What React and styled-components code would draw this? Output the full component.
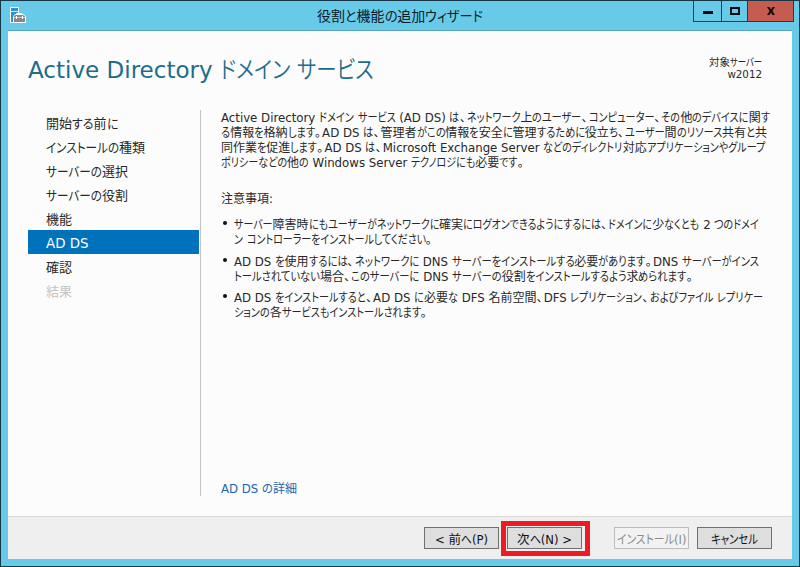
import React, { useLayoutEffect, useRef } from 'react';
import styled, { createGlobalStyle } from 'styled-components';

const GlobalStyle = createGlobalStyle`
  * { box-sizing: border-box; }
  body { margin: 0; background: #163746; }
`;

const Desktop = styled.div`
  width: 800px;
  height: 567px;
  padding: 1px;
  background: #163746;
  font-family: "Noto Sans CJK JP", sans-serif;
  font-size: 12px;
  color: #282828;
`;

const Window = styled.div`
  display: flex;
  flex-direction: column;
  width: 798px;
  height: 565px;
  padding: 0 7px 7px;
  background: #67cae9;
`;

const TitleBar = styled.header`
  display: grid;
  grid-template-columns: 309px 1fr 101px;
  height: 29px;
  flex: none;
  margin-right: -2px;
  font-size: 14px;
  line-height: 29px;
  color: #0b1c24;
`;

const AppIcon = styled.svg`
  display: block;
  margin: 6px 0 0 2px;
`;

const WindowButtons = styled.div`
  display: flex;
  height: 21px;
  border: 1px solid #1d3e4c;
  border-top: 0;
`;

const WindowButton = styled.button`
  display: flex;
  align-items: center;
  justify-content: center;
  width: ${(p) => p.$width}px;
  padding: 0;
  border: 0;
  border-left: ${(p) => (p.$first ? 0 : 1)}px solid #1d3e4c;
  background: ${(p) => (p.$close ? '#c65b50' : 'transparent')};
`;

const Client = styled.main`
  display: flex;
  flex-direction: column;
  flex: 1;
  border-top: 1px solid #5ba6bb;
  background: #fcfcfc;
`;

const PageHeader = styled.div`
  display: flex;
  justify-content: space-between;
  height: 79px;
  padding: 21px 30px 0 20px;
`;

const Heading = styled.h1`
  margin: 0;
  font-size: 23.5px;
  font-weight: 350;
  line-height: 32px;
  color: #1b6d8c;
`;

const Target = styled.div`
  display: flex;
  flex-direction: column;
  align-items: flex-end;
  padding-top: 4px;
  font-size: 10.5px;
  line-height: 12px;
`;

const Columns = styled.div`
  display: flex;
  height: 386px;
  margin-bottom: 20px;
`;

const Steps = styled.nav`
  width: 193px;
  padding: 0 1px 0 20px;
  border-right: 1px solid #c3c3c6;
`;

const Step = styled.div`
  --latin-size: 1.03em;
  height: 24px;
  padding-left: 18px;
  font-size: 13px;
  line-height: 25px;
  color: ${(p) => (p.$active ? '#fff' : p.$disabled ? '#c4c4c4' : '#282828')};
  background: ${(p) => (p.$active ? '#0072bc' : 'transparent')};
`;

const Article = styled.section`
  display: flex;
  flex-direction: column;
  flex: 1;
  padding-left: 20px;
  line-height: 15px;
`;

const Paragraph = styled.div`
  margin-top: ${(p) => p.$top || 0}px;
`;

const Notes = styled.ul`
  display: flex;
  flex-direction: column;
  gap: 6px;
  margin: 11px 0 0;
  padding: 0;
  list-style: none;
`;

const Note = styled.li`
  display: grid;
  grid-template-columns: 13px 1fr;
  line-height: 15.3px;
`;

const Bullet = styled.i`
  width: 4px;
  height: 4px;
  margin: 5px 0 0 2px;
  border-radius: 50%;
  background: #111;
`;

const DetailsLink = styled.a`
  margin: auto 0 1px;
  color: #1d65b0;
`;

const Footer = styled.footer`
  display: flex;
  align-items: flex-start;
  flex: 1;
  padding: 4px 20px 0 0;
  justify-content: flex-end;
  border-top: 1px solid #d9d9d9;
  background: #efefef;
`;

const Button = styled.button`
  --latin-size: 0.93em;
  display: flex;
  align-items: center;
  justify-content: center;
  width: 75px;
  height: 22px;
  margin: ${(p) => p.$margin || '6px 0 0'};
  padding: 0;
  border: 1px solid ${(p) => (p.disabled ? '#bcbcbc' : '#707074')};
  background: ${(p) => (p.disabled ? '#f2f2f2' : '#dededf')};
  font: 12.5px "Noto Sans CJK JP", sans-serif;
  color: ${(p) => (p.disabled ? '#8c8c8c' : '#111')};
`;

const Highlight = styled.div`
  height: 35px;
  margin: 0 24px 0 2px;
  padding: 1px 3px 0 1px;
  border: 5px solid #ed1c24;
`;

const TextLine = styled.span`
  display: block;
  width: max-content;
  white-space: pre;
  font-feature-settings: "palt";
`;

const Kana = styled.span`
  display: inline-block;
  line-height: 1px;
  transform-origin: 0 0;
`;

const Mark = styled.span`
  padding-right: 0.1em;
  font-feature-settings: "halt";
`;

const Latin = styled.span`
  font-family: "DejaVu Sans", sans-serif;
  font-size: var(--latin-size, 0.98em);
  font-weight: 400;
  line-height: 1px;
`;

const runPattern = /[\u3041-\u30ff]+|[\u3001\u3002]|[\x20-\x7e]+|[^\u3001-\u30ff\x20-\x7e]+/g;

/* One line of mixed script; kana are condensed so that the line has its given width. */
function Line({ children, width }) {
  const ref = useRef(null);
  const runs = children.match(runPattern);
  useLayoutEffect(() => {
    const fit = () => {
      const el = ref.current;
      if (!el || !width) return;
      const kana = [...el.querySelectorAll('[data-kana]')];
      kana.forEach((k) => { k.style.width = ''; k.style.transform = ''; });
      const widths = kana.map((k) => k.getBoundingClientRect().width);
      const total = widths.reduce((a, b) => a + b, 0);
      if (!total) return;
      const scale = (width - el.getBoundingClientRect().width + total) / total;
      kana.forEach((k, i) => {
        k.style.width = `${widths[i] * scale}px`;
        k.style.transform = `scaleX(${scale})`;
      });
    };
    fit();
    document.fonts.ready.then(fit);
  }, [children, width]);
  return (
    <TextLine ref={ref}>
      {runs.map((run, i) => {
        if (/^[\u3041-\u30ff]/.test(run)) return <Kana key={i} data-kana="">{run}</Kana>;
        if (/^[\u3001\u3002]/.test(run)) return <Mark key={i}>{run}</Mark>;
        if (/^[\x20-\x7e]/.test(run)) return <Latin key={i}>{run}</Latin>;
        return run;
      })}
    </TextLine>
  );
}

const steps = [
  ['開始する前に', 72],
  ['インストールの種類', 99],
  ['サーバーの選択', 82],
  ['サーバーの役割', 82],
  ['機能', 26],
  ['AD DS', 42],
  ['確認', 26],
  ['結果', 26],
];

const intro = [
  ['Active Directory ドメイン サービス (AD DS) は、ネットワーク上のユーザー、コンピューター、その他のデバイスに関す', 549],
  ['る情報を格納します。AD DS は、管理者がこの情報を安全に管理するために役立ち、ユーザー間のリソース共有と共', 546],
  ['同作業を促進します。AD DS は、Microsoft Exchange Server などのディレクトリ対応アプリケーションやグループ', 544],
  ['ポリシーなどの他の Windows Server テクノロジにも必要です。', 304],
];

const notes = [
  [
    ['サーバー障害時にもユーザーがネットワークに確実にログオンできるようにするには、ドメインに少なくとも 2 つのドメイ', 525],
    ['ン コントローラーをインストールしてください。', 199],
  ],
  [
    ['AD DS を使用するには、ネットワークに DNS サーバーをインストールする必要があります。DNS サーバーがインス', 525],
    ['トールされていない場合、このサーバーに DNS サーバーの役割をインストールするよう求められます。', 460],
  ],
  [
    ['AD DS をインストールすると、AD DS に必要な DFS 名前空間、DFS レプリケーション、およびファイル レプリケー', 529],
    ['ションの各サービスもインストールされます。', 194],
  ],
];

export default function App() {
  return (
    <Desktop>
      <GlobalStyle />
      <Window>
        <TitleBar>
          <AppIcon width="17" height="17" viewBox="0 0 17 17">
            <path d="M.5 .5h8v15h-8z" fill="#2f8fd0" stroke="#fff" />
            <path d="M1 4.500h7" stroke="#c9e8f5" />
            <path d="M6.500 8V6.500h5V8" fill="none" stroke="#fff" />
            <path d="M3.500 9.500 5 7.500h8l2.500 2v6h-12z" fill="#85888c" stroke="#fff" />
            <path d="M4 10.500h11" stroke="#c9ced1" />
            <path d="M6.500 9v3M12.500 9v3" stroke="#fff" />
          </AppIcon>
          <Line width={166}>役割と機能の追加ウィザード</Line>
          <WindowButtons>
            <WindowButton $width={27} $first aria-label="最小化">
              <svg width="10" height="10"><path d="M0 5h10v3H0z" fill="#0a0a0a" /></svg>
            </WindowButton>
            <WindowButton $width={26} aria-label="最大化">
              <svg width="10" height="8"><path d="M1 1h8v6H1z" fill="none" stroke="#0a0a0a" strokeWidth="2" /></svg>
            </WindowButton>
            <WindowButton $width={46} $close aria-label="閉じる">
              <svg width="10" height="8"><path d="M1 0h2.500L5 2.400 6.500 0H9L6.400 4 9 8H6.500L5 5.600 3.500 8H1l2.600-4z" fill="#16090a" /></svg>
            </WindowButton>
          </WindowButtons>
        </TitleBar>
        <Client>
          <PageHeader>
            <Heading><Line width={346}>Active Directory ドメイン サービス</Line></Heading>
            <Target>
              <Line width={53}>対象サーバー</Line>
              <Line>w2012</Line>
            </Target>
          </PageHeader>
          <Columns>
            <Steps>
              {steps.map(([text, width], i) => (
                <Step key={text} $active={i === 5} $disabled={i === 7}><Line width={width}>{text}</Line></Step>
              ))}
            </Steps>
            <Article>
              <Paragraph $top={-1}>{intro.map(([t, w]) => <Line key={t} width={w}>{t}</Line>)}</Paragraph>
              <Paragraph $top={21}><Line>注意事項:</Line></Paragraph>
              <Notes>
                {notes.map((lines) => (
                  <Note key={lines[0][0]}>
                    <Bullet />
                    <div>{lines.map(([t, w]) => <Line key={t} width={w}>{t}</Line>)}</div>
                  </Note>
                ))}
              </Notes>
              <DetailsLink><Line width={76}>AD DS の詳細</Line></DetailsLink>
            </Article>
          </Columns>
          <Footer>
            <Button $margin="6px 0 0"><Line width={53}>{'< 前へ(P)'}</Line></Button>
            <Highlight>
              <Button $margin="0"><Line width={55}>{'次へ(N) >'}</Line></Button>
            </Highlight>
            <Button disabled><Line width={70}>インストール(I)</Line></Button>
            <Button $margin="6px 0 0 8px"><Line width={47}>キャンセル</Line></Button>
          </Footer>
        </Client>
      </Window>
    </Desktop>
  );
}
